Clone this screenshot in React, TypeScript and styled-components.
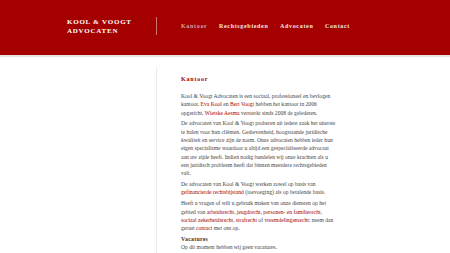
import React from "react";
import styled, { createGlobalStyle } from "styled-components";

const Global = createGlobalStyle`
  html, body { margin: 0; padding: 0; background: #fff; }
  body { font-family: "Liberation Serif", "Times New Roman", serif; }
`;

const Header = styled.header`
  background: #a50000;
  height: 55px;
  border-bottom: 2px solid #e4e4e4;
  display: grid;
  grid-template-columns: 156px 1fr;
  align-items: center;
`;

const Logo = styled.div`
  padding-left: 67px;
  color: #fff;
  font-weight: bold;
  font-size: 7px;
  line-height: 9px;
  letter-spacing: 0.75px;
  padding-bottom: 1px;
`;

const Nav = styled.nav`
  display: flex;
  align-items: center;
  gap: 11.5px;
  height: 18px;
  border-left: 1px solid rgba(255, 255, 255, 0.45);
  padding-left: 24px;
  margin-bottom: 3px;
`;

const NavItem = styled.a<{ $active?: boolean }>`
  color: ${(p) => (p.$active ? "#d6a3a3" : "#f5e6e6")};
  font-weight: bold;
  font-size: 6px;
  letter-spacing: 0.68px;
  text-decoration: none;
`;

const Body = styled.div`
  display: grid;
  grid-template-columns: 156px 1fr;
  padding-top: 10px;
`;

const Main = styled.main`
  border-left: 1px solid #ebebeb;
  padding: 8px 0 20px 24px;
  min-height: 200px;
`;

const Heading = styled.h1`
  margin: 0 0 9px;
  color: #a50000;
  font-size: 6px;
  line-height: 8px;
  letter-spacing: 0.8px;
  font-weight: bold;
`;

const Para = styled.p`
  margin: 0 0 2.6px;
  color: #444;
  font-size: 5.6px;
  line-height: 8.3px;
  white-space: nowrap;
`;

const Link = styled.a`
  color: #a50000;
  text-decoration: none;
`;

const SubHeading = styled.h2`
  margin: 0;
  color: #333;
  font-size: 5.8px;
  line-height: 8.3px;
  font-weight: bold;
  letter-spacing: 0.3px;
`;

export default function App() {
  return (
    <>
      <Global />
      <Header>
        <Logo>
          KOOL &amp; VOOGT
          <br />
          ADVOCATEN
        </Logo>
        <Nav>
          <NavItem $active>Kantoor</NavItem>
          <NavItem>Rechtsgebieden</NavItem>
          <NavItem>Advocaten</NavItem>
          <NavItem>Contact</NavItem>
        </Nav>
      </Header>
      <Body>
        <div />
        <Main>
          <Heading>Kantoor</Heading>
          <Para>
            Kool &amp; Voogt Advocaten is een sociaal, professioneel en bevlogen
            <br />
            kantoor. <Link>Eva Kool</Link> en <Link>Bert Voogt</Link> hebben het kantoor in 2006
            <br />
            opgericht. <Link>Wietske Aesma</Link> versterkt sinds 2008 de gelederen.
          </Para>
          <Para>
            De advocaten van Kool &amp; Voogt proberen uit iedere zaak het uiterste
            <br />
            te halen voor hun cliënten. Gedrevenheid, hoogstaande juridische
            <br />
            kwaliteit en service zijn de norm. Onze advocaten hebben ieder hun
            <br />
            eigen specialisme waardoor u altijd een gespecialiseerde advocaat
            <br />
            aan uw zijde heeft. Indien nodig bundelen wij onze krachten als u
            <br />
            een juridisch probleem heeft dat binnen meerdere rechtsgebieden
            <br />
            valt.
          </Para>
          <Para>
            De advocaten van Kool &amp; Voogt werken zowel op basis van
            <br />
            <Link>gefinancierde rechtsbijstand</Link> (toevoeging) als op betalende basis.
          </Para>
          <Para>
            Heeft u vragen of wilt u gebruik maken van onze diensten op het
            <br />
            gebied van <Link>arbeidsrecht</Link>, <Link>jeugdrecht</Link>, <Link>personen- en familierecht</Link>,
            <br />
            <Link>sociaal zekerheidsrecht</Link>, <Link>strafrecht</Link> of <Link>vreemdelingenrecht</Link>: neem dan
            <br />
            gerust <Link>contact</Link> met ons op.
          </Para>
          <SubHeading>Vacatures</SubHeading>
          <Para>Op dit moment hebben wij geen vacatures.</Para>
        </Main>
      </Body>
    </>
  );
}
